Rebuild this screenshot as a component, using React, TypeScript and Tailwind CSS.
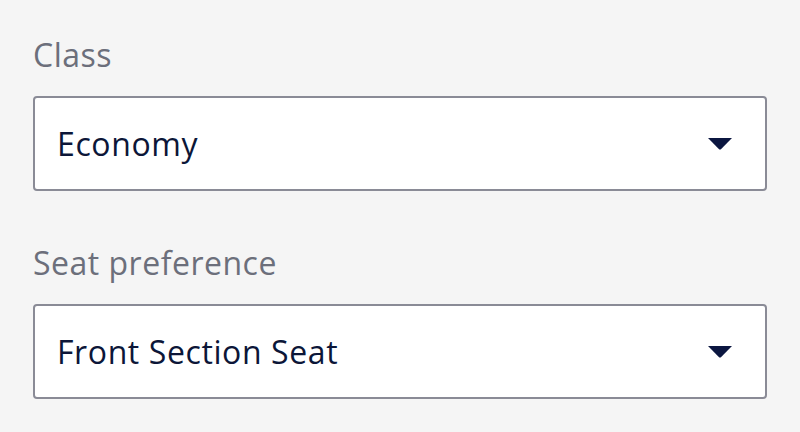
import { useState } from 'react'

const fields = [
  { label: 'Class', value: 'Economy' },
  { label: 'Seat preference', value: 'Front Section Seat' },
]

function Caret() {
  return (
    <svg width="26" height="13" viewBox="0 0 26 13" className="shrink-0">
      <path d="M1 1 H25 L14.2 12 Q13 13.2 11.8 12 Z" fill="#0b1640" />
    </svg>
  )
}

export default function App() {
  const [values] = useState(fields)

  return (
    <div className="min-h-[432px] w-full bg-[#f5f5f5] px-[33px] pt-[35px] font-['Open_Sans',sans-serif]">
      <div className="flex w-[734px] flex-col gap-[52px]">
        {values.map((f) => (
          <div key={f.label} className="flex flex-col">
            <label className="mb-[21px] text-[32px] leading-[40px] tracking-[0.5px] text-[#6c6f7b]">{f.label}</label>
            <div className="flex h-[95px] items-center justify-between rounded-[4px] border-2 border-[#8a8b96] bg-white pl-[22px] pr-[32px]">
              <span className="text-[32px] leading-[40px] tracking-[0.6px] text-[#0c1638]">{f.value}</span>
              <Caret />
            </div>
          </div>
        ))}
      </div>
    </div>
  )
}
